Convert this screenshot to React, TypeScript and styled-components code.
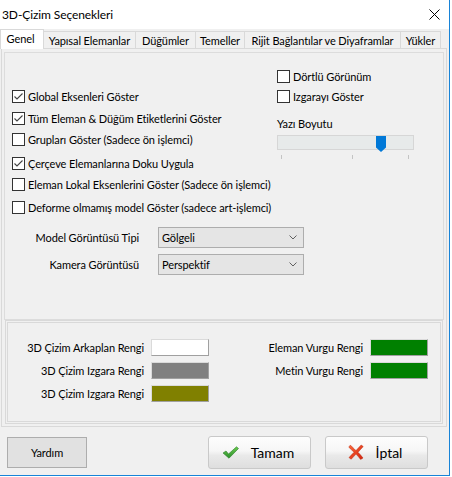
import React from "react";
import styled, { createGlobalStyle } from "styled-components";

const Global = createGlobalStyle`
  html, body { margin: 0; padding: 0; background: #ffffff; }
  body {
    font-family: Lato, "Noto Sans", sans-serif;
    font-size: 11px;
    letter-spacing: -0.1px;
    color: #000;
  }
  * { box-sizing: border-box; }
`;

const Window = styled.div`
  width: 450px;
  height: 476px;
  background: #f0f0f0;
  border-right: 1px solid #1883d7;
  border-bottom: 1px solid #1883d7;
  display: flex;
  flex-direction: column;
`;

const TitleBar = styled.div`
  height: 29px;
  flex: none;
  background: #fff;
  display: flex;
  align-items: center;
  justify-content: space-between;
  padding: 0 9px 0 2px;
`;

const Title = styled.span`
  font-size: 12px;
  line-height: 16px;
`;

const TabStrip = styled.div`
  height: 19px;
  flex: none;
  display: flex;
  align-items: flex-end;
  position: relative;
  z-index: 2;
`;

const Tab = styled.div<{ $w: number; $active?: boolean; $first?: boolean }>`
  width: ${(p) => p.$w}px;
  height: ${(p) => (p.$active ? 20 : 17)}px;
  margin-bottom: ${(p) => (p.$active ? -1 : 0)}px;
  margin-left: ${(p) => (p.$first ? 0 : -1)}px;
  border: 1px solid #d9d9d9;
  border-bottom: none;
  background: ${(p) => (p.$active ? "#ffffff" : "#f0f0f0")};
  display: flex;
  align-items: center;
  justify-content: center;
  padding-bottom: ${(p) => (p.$active ? 2 : 0)}px;
  padding-right: ${(p) => (p.$active ? 3 : 0)}px;
  position: relative;
  z-index: ${(p) => (p.$active ? 2 : 1)};
  white-space: nowrap;
`;

const Page = styled.div`
  width: 446px;
  height: 379px;
  flex: none;
  margin-left: 1px;
  border: 1px solid #d9d9d9;
  padding: 3px 1px 2px 1px;
  display: flex;
  flex-direction: column;
`;

const TopGroup = styled.div`
  height: 268px;
  flex: none;
  margin: 0 1px;
  border: 1px solid #dcdcdc;
  padding: 17px 0 0 7px;
  display: flex;
  flex-direction: column;
`;

const TopArea = styled.div`
  display: grid;
  grid-template-columns: 265px 1fr;
  align-items: start;
`;

const Column = styled.div<{ $pt?: number }>`
  display: flex;
  flex-direction: column;
  padding-top: ${(p) => p.$pt ?? 0}px;
`;

const CheckRow = styled.label<{ $mt?: number }>`
  display: flex;
  align-items: center;
  gap: 3px;
  height: 13px;
  line-height: 13px;
  margin-top: ${(p) => p.$mt ?? 0}px;
  white-space: nowrap;
`;

const Box = styled.span`
  width: 13px;
  height: 13px;
  flex: none;
  border: 1px solid #333333;
  background: #ffffff;
  display: flex;
  align-items: center;
  justify-content: center;
`;

const FieldLabel = styled.div<{ $mt?: number }>`
  line-height: 14px;
  margin-top: ${(p) => p.$mt ?? 0}px;
`;

const SliderTrack = styled.div`
  width: 137px;
  height: 15px;
  margin-top: 4px;
  border: 1px solid #d6d6d6;
  background: #e7eaea;
  position: relative;
`;

const Thumb = styled.svg`
  position: absolute;
  top: 0;
  display: block;
`;

const Ticks = styled.div`
  width: 137px;
  height: 4px;
  margin-top: 5px;
  position: relative;
`;

const Tick = styled.span`
  position: absolute;
  top: 0;
  width: 1px;
  height: 4px;
  background: #c4c4c4;
`;

const DropArea = styled.div`
  display: flex;
  flex-direction: column;
  gap: 6px;
  margin-top: 13px;
`;

const DropRow = styled.div`
  display: flex;
  align-items: center;
  height: 21px;
`;

const DropLabel = styled.div`
  width: 127px;
  text-align: right;
  margin-right: 19px;
  white-space: nowrap;
`;

const Select = styled.div`
  width: 146px;
  height: 21px;
  border: 1px solid #adadad;
  background: #e5e5e5;
  display: flex;
  align-items: center;
  justify-content: space-between;
  padding: 0 6px 0 3px;
`;

const BottomGroup = styled.div`
  height: 104px;
  flex: none;
  margin: 0 2px;
  border: 3px double #d9d9d9;
  padding: 16px 0 0 3px;
  display: flex;
  gap: 30px;
`;

const ColorBlock = styled.div`
  display: flex;
  flex-direction: column;
  gap: 6px;
`;

const ColorRow = styled.div`
  display: flex;
  align-items: center;
  gap: 7px;
  height: 17px;
`;

const ColorLabel = styled.div<{ $w: number }>`
  width: ${(p) => p.$w}px;
  text-align: right;
  white-space: nowrap;
`;

const Swatch = styled.div<{ $c: string }>`
  width: 58px;
  height: 17px;
  background: ${(p) => p.$c};
  border: 1px solid;
  border-color: #dadada #a0a0a0 #a0a0a0 #dadada;
`;

const ButtonBar = styled.div`
  flex: 1;
  display: flex;
  align-items: center;
  padding: 2px 21px 0 7px;
`;

const PlainButton = styled.div`
  width: 80px;
  height: 31px;
  border: 1px solid #adadad;
  background: #e1e1e1;
  display: flex;
  align-items: center;
  justify-content: center;
`;

const IconButton = styled.div<{ $ml?: string }>`
  width: 103px;
  height: 33px;
  margin-left: ${(p) => p.$ml ?? "0"};
  border: 1px solid #c9c9c9;
  border-radius: 3px;
  background: linear-gradient(#fdfdfd 0%, #f6f6f6 45%, #e9e9e9 60%, #dedede 100%);
  display: flex;
  align-items: center;
  justify-content: center;
  gap: 12px;
  padding-right: 3px;
  font-size: 14px;
  letter-spacing: 0;
`;

function Check({ checked }: { checked?: boolean }) {
  return (
    <Box>
      {checked && (
        <svg width="11" height="11" viewBox="0 0 11 11">
          <polyline points="1.5,5.5 4,8 9.5,2.5" fill="none" stroke="#444" strokeWidth="1.1" />
        </svg>
      )}
    </Box>
  );
}

function Chevron() {
  return (
    <svg width="8" height="5" viewBox="0 0 8 5">
      <polyline points="0.5,0.5 4,4 7.5,0.5" fill="none" stroke="#606060" strokeWidth="1" />
    </svg>
  );
}

function CloseIcon() {
  return (
    <svg width="11" height="11" viewBox="0 0 11 11">
      <line x1="0.5" y1="0.5" x2="10.5" y2="10.5" stroke="#000" strokeWidth="1" />
      <line x1="10.5" y1="0.5" x2="0.5" y2="10.5" stroke="#000" strokeWidth="1" />
    </svg>
  );
}

function OkIcon() {
  return (
    <svg width="17" height="13" viewBox="0 0 17 13">
      <defs>
        <linearGradient id="okg" x1="0" y1="0" x2="0" y2="1">
          <stop offset="0" stopColor="#6ccb4f" />
          <stop offset="1" stopColor="#2b8f2b" />
        </linearGradient>
      </defs>
      <path d="M1 7 L4 5 L6.5 8 L14.5 0.8 L16.5 2.5 L7 12.2 Z" fill="url(#okg)" stroke="#2a7d2a" strokeWidth="0.6" strokeLinejoin="round" />
    </svg>
  );
}

function CancelIcon() {
  return (
    <svg width="16" height="16" viewBox="0 0 16 16">
      <defs>
        <linearGradient id="xg" x1="0" y1="0" x2="1" y2="1">
          <stop offset="0" stopColor="#ff6a3a" />
          <stop offset="1" stopColor="#d0210c" />
        </linearGradient>
      </defs>
      <path d="M2.2 1.2 C4 2.5 6 4.6 8 6.6 C10 4.3 11.6 2.6 13.2 1 L15.2 2.6 C13.4 4.6 11.6 6.4 10 8.3 C11.8 10.2 13.6 12 15 14 L12.6 15.4 C11 13.4 9.6 11.8 8 10.1 C6.4 11.8 4.8 13.6 3.2 15.2 L1 13.6 C2.6 11.8 4.4 10 6 8.3 C4.4 6.6 2.6 4.8 0.8 3.2 Z" fill="url(#xg)" stroke="#b8260f" strokeWidth="0.5" />
    </svg>
  );
}

const tabs: { label: string; w: number }[] = [
  { label: "Genel", w: 44 },
  { label: "Yapısal Elemanlar", w: 93 },
  { label: "Düğümler", w: 61 },
  { label: "Temeller", w: 50 },
  { label: "Rijit Bağlantılar ve Diyaframlar", w: 157 },
  { label: "Yükler", w: 41 },
];

const leftChecks: { label: string; checked: boolean; mt: number }[] = [
  { label: "Global Eksenleri Göster", checked: true, mt: 0 },
  { label: "Tüm Eleman & Düğüm Etiketlerini Göster", checked: true, mt: 9 },
  { label: "Grupları Göster (Sadece ön işlemci)", checked: false, mt: 8 },
  { label: "Çerçeve Elemanlarına Doku Uygula", checked: true, mt: 11 },
  { label: "Eleman Lokal Eksenlerini Göster (Sadece ön işlemci)", checked: false, mt: 8 },
  { label: "Deforme olmamış model Göster (sadece art-işlemci)", checked: false, mt: 10 },
];

const tickPositions = [4, 75, 131];

export default function App() {
  return (
    <>
      <Global />
      <Window>
        <TitleBar>
          <Title>3D-Çizim Seçenekleri</Title>
          <CloseIcon />
        </TitleBar>
        <TabStrip>
          {tabs.map((t, i) => (
            <Tab key={t.label} $w={t.w} $active={i === 0} $first={i === 0}>
              {t.label}
            </Tab>
          ))}
        </TabStrip>
        <Page>
          <TopGroup>
            <TopArea>
              <Column $pt={20}>
                {leftChecks.map((c) => (
                  <CheckRow key={c.label} $mt={c.mt}>
                    <Check checked={c.checked} />
                    <span>{c.label}</span>
                  </CheckRow>
                ))}
              </Column>
              <Column>
                <CheckRow>
                  <Check />
                  <span>Dörtlü Görünüm</span>
                </CheckRow>
                <CheckRow $mt={7}>
                  <Check />
                  <span>Izgarayı Göster</span>
                </CheckRow>
                <FieldLabel $mt={14}>Yazı Boyutu</FieldLabel>
                <SliderTrack>
                  <Thumb width="10" height="16" viewBox="0 0 10 16" style={{ left: 98 }}>
                    <path d="M0 0 H10 V11.5 L5 16 L0 11.5 Z" fill="#0078d7" />
                  </Thumb>
                </SliderTrack>
                <Ticks>
                  {tickPositions.map((x) => (
                    <Tick key={x} style={{ left: x }} />
                  ))}
                </Ticks>
              </Column>
            </TopArea>
            <DropArea>
              <DropRow>
                <DropLabel>Model Görüntüsü Tipi</DropLabel>
                <Select>
                  <span>Gölgeli</span>
                  <Chevron />
                </Select>
              </DropRow>
              <DropRow>
                <DropLabel>Kamera Görüntüsü</DropLabel>
                <Select>
                  <span>Perspektif</span>
                  <Chevron />
                </Select>
              </DropRow>
            </DropArea>
          </TopGroup>
          <BottomGroup>
            <ColorBlock>
              <ColorRow>
                <ColorLabel $w={133}>3D Çizim Arkaplan Rengi</ColorLabel>
                <Swatch $c="#ffffff" />
              </ColorRow>
              <ColorRow>
                <ColorLabel $w={133}>3D Çizim Izgara Rengi</ColorLabel>
                <Swatch $c="#808080" />
              </ColorRow>
              <ColorRow>
                <ColorLabel $w={133}>3D Çizim Izgara Rengi</ColorLabel>
                <Swatch $c="#808000" />
              </ColorRow>
            </ColorBlock>
            <ColorBlock>
              <ColorRow>
                <ColorLabel $w={124}>Eleman Vurgu Rengi</ColorLabel>
                <Swatch $c="#008000" />
              </ColorRow>
              <ColorRow>
                <ColorLabel $w={124}>Metin Vurgu Rengi</ColorLabel>
                <Swatch $c="#008000" />
              </ColorRow>
            </ColorBlock>
          </BottomGroup>
        </Page>
        <ButtonBar>
          <PlainButton>Yardım</PlainButton>
          <IconButton $ml="auto">
            <OkIcon />
            <span>Tamam</span>
          </IconButton>
          <IconButton $ml="14px">
            <CancelIcon />
            <span>İptal</span>
          </IconButton>
        </ButtonBar>
      </Window>
    </>
  );
}
